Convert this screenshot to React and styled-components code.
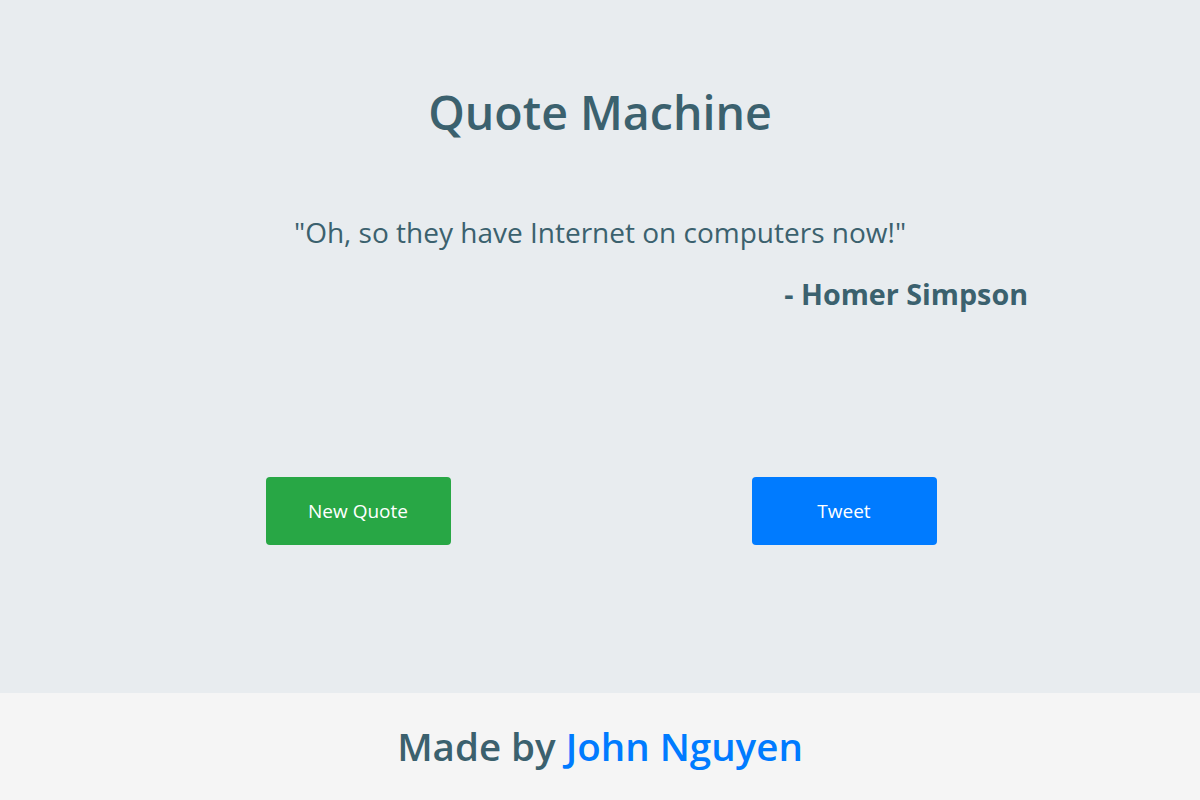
import React from "react";
import styled, { createGlobalStyle } from "styled-components";

const GlobalStyle = createGlobalStyle`
  html, body {
    margin: 0;
    padding: 0;
    background-color: #e8ecef;
    font-family: "Open Sans", "Noto Sans", sans-serif;
    color: #3b616e;
  }
`;

const Page = styled.div`
  display: flex;
  flex-direction: column;
  height: 800px;
`;

const Main = styled.main`
  flex: 0 0 693px;
  display: flex;
  flex-direction: column;
  align-items: center;
  padding-top: 78px;
  box-sizing: border-box;
`;

const Title = styled.h1`
  margin: 0;
  font-size: 46.5px;
  font-weight: 600;
  line-height: 68px;
`;

const QuoteBox = styled.div`
  width: 856px;
  margin-top: 66px;
  display: flex;
  flex-direction: column;
`;

const QuoteText = styled.p`
  margin: 0;
  text-align: center;
  font-size: 28px;
  line-height: 40px;
`;

const Author = styled.p`
  margin: 24px 0 0;
  text-align: right;
  font-size: 28.7px;
  font-weight: 700;
  line-height: 36px;
`;

const Buttons = styled.div`
  display: flex;
  justify-content: center;
  gap: 301px;
  margin-top: 165px;
  padding-left: 2px;
`;

const Button = styled.button`
  width: 185px;
  height: 68px;
  border: none;
  border-radius: 4px;
  background-color: ${(p) => p.color};
  color: #fff;
  font-family: "Open Sans", sans-serif;
  font-size: 19px;
  cursor: pointer;
`;

const Footer = styled.footer`
  flex: 1;
  background-color: #f5f5f5;
  display: flex;
  align-items: center;
  justify-content: center;
`;

const FooterText = styled.h2`
  margin: 0 0 2px;
  font-size: 38.5px;
  font-weight: 600;
`;

const Link = styled.a`
  color: #007bff;
  text-decoration: none;
`;

const App = () => {
  return (
    <Page>
      <GlobalStyle />
      <Main>
        <Title>Quote Machine</Title>
        <QuoteBox>
          <QuoteText>"Oh, so they have Internet on computers now!"</QuoteText>
          <Author>- Homer Simpson</Author>
        </QuoteBox>
        <Buttons>
          <Button color="#28a745">New Quote</Button>
          <Button color="#007bff">Tweet</Button>
        </Buttons>
      </Main>
      <Footer>
        <FooterText>
          Made by <Link href="#">John Nguyen</Link>
        </FooterText>
      </Footer>
    </Page>
  );
};

export default App;
